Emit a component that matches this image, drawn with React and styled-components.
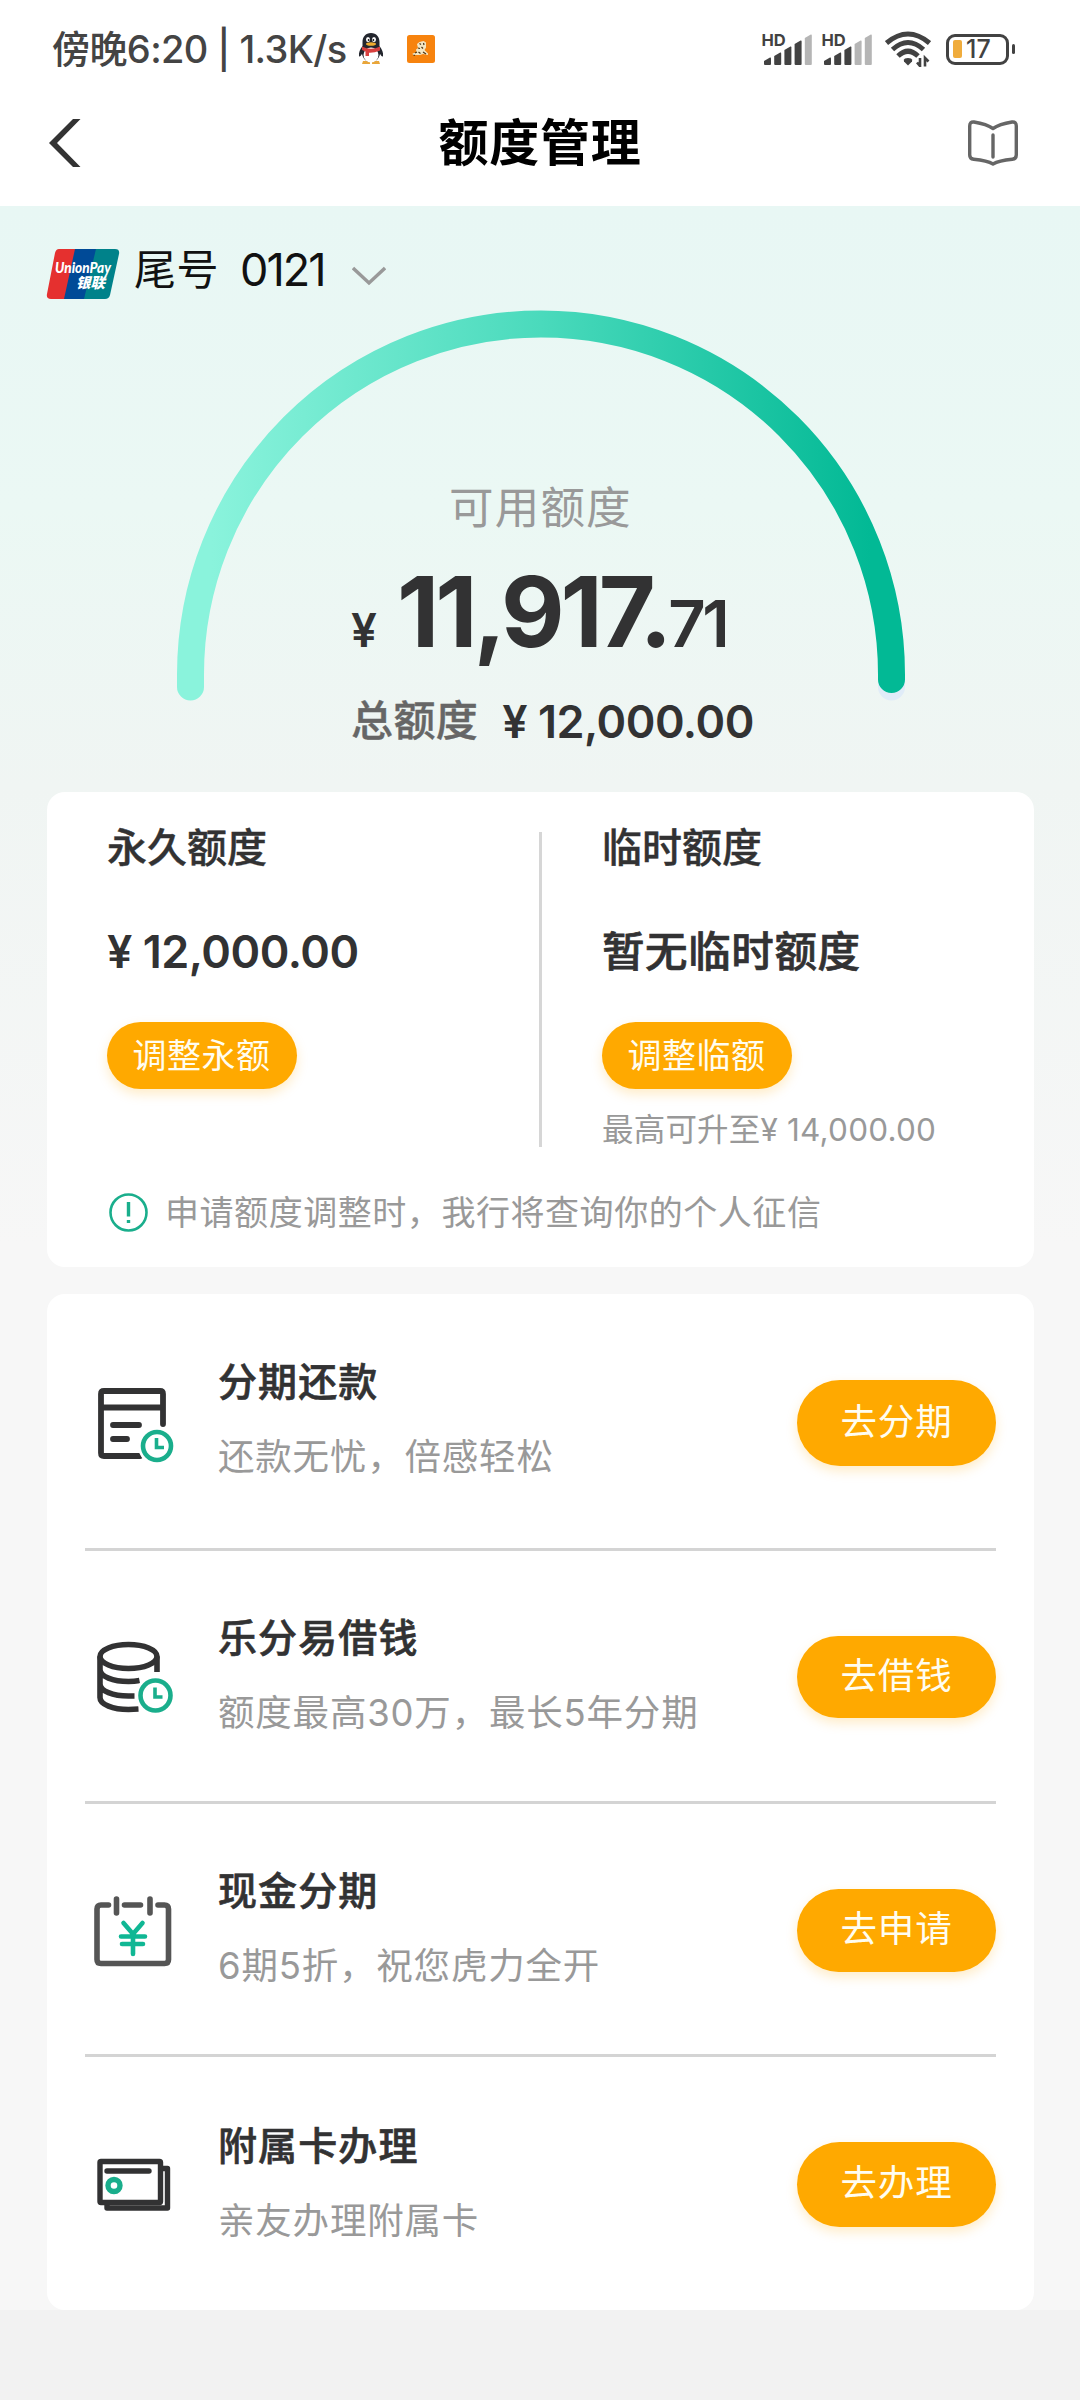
import React from 'react';
import styled, { createGlobalStyle } from 'styled-components';

const GlobalStyle = createGlobalStyle`
  * {
    box-sizing: border-box;
  }

  body {
    margin: 0;
    background: #f2f2f2;
    font-family: Inter, 'Noto Sans CJK SC', sans-serif;
    color: #323233;
  }

  svg {
    display: block;
    flex: none;
  }
`;

// Page layout
const Page = styled.div`
  width: 1080px;
  height: 2400px;
  overflow: hidden;
`;

const Text = styled.span`
  display: block;
  flex: none;
  white-space: pre;
  font-size: ${(p) => p.$size}px;
  line-height: ${(p) => p.$line || p.$size}px;
  font-weight: ${(p) => p.$weight || 400};
  letter-spacing: ${(p) => p.$spacing || 0}px;
  color: ${(p) => p.$color || '#323233'};
  -webkit-text-stroke: ${(p) => p.$stroke || 0}px currentColor;
`;

// Status bar
const StatusBar = styled.div`
  height: 98px;
  padding: 0 65px 0 52px;
  display: flex;
  align-items: center;
  justify-content: space-between;
  background: #fff;
`;

const StatusLeft = styled.div`
  display: flex;
  align-items: center;

  svg + svg {
    margin-left: 23px;
  }
`;

const StatusTime = styled(Text)`
  width: 306px;
`;

const StatusRight = styled.div`
  display: flex;
  align-items: center;
  gap: 10px;
`;

const WifiIcon = styled.svg`
  margin-left: 3px;
`;

const Battery = styled.div`
  display: flex;
  align-items: center;
  gap: 3px;
  margin-left: 5px;
`;

const BatteryBody = styled.div`
  width: 63px;
  height: 31px;
  padding: 0 4px;
  display: flex;
  align-items: center;
  gap: 4px;
  border: 3px solid #424242;
  border-radius: 9px;
`;

const BatteryLevel = styled.div`
  width: 9px;
  height: 18px;
  border-radius: 2px;
  background: #f0ac3c;
`;

const BatteryTip = styled.div`
  width: 3px;
  height: 10px;
  border-radius: 2px;
  background: #424242;
`;

// Nav bar
const NavBar = styled.div`
  height: 108px;
  padding: 0 48px 18px;
  display: grid;
  grid-template-columns: 1fr auto 1fr;
  align-items: center;
  background: #fff;

  svg:last-child {
    justify-self: end;
    margin-right: 14px;
  }
`;

// Content
const Content = styled.main`
  height: 2104px;
  padding: 0 46px 0 47px;
  background: linear-gradient(#e8f7f4 0, #ebf8f4 300px, #f0f5f3 580px, #f7f7f7 1040px);
`;

const CardPicker = styled.div`
  height: 104px;
  padding-top: 43px;
  display: flex;
  align-items: flex-start;
`;

const CardLabel = styled(Text)`
  margin-left: 15px;
`;

const CardTail = styled(Text)`
  width: 111px;
  margin-left: 21px;
`;

const PickerArrow = styled.svg`
  margin: 17px 0 0 1px;
`;

const Gauge = styled.section`
  position: relative;
  height: 482px;
  display: flex;
  flex-direction: column;
`;

const GaugeArc = styled.svg`
  position: absolute;
  top: 0;
  left: 128px;
`;

const GaugeLabel = styled(Text)`
  margin: 176px 0 0 402px;
`;

const Available = styled.div`
  height: 100px;
  margin: 32px 0 0 304px;
  display: flex;
  align-items: baseline;
`;

const AvailableMain = styled(Text)`
  margin-left: 20px;
`;

const Total = styled.div`
  margin: 36px 0 0 304px;
  display: flex;
  align-items: center;
  gap: 24px;
`;

// Cards
const Card = styled.section`
  background: #fff;
  border-radius: 18px;
`;

const LimitCard = styled(Card)`
  height: 475px;
  padding-top: 40px;
`;

const Limits = styled.div`
  height: 315px;
  display: grid;
  grid-template-columns: 492px 3px 1fr;
`;

const LimitColumn = styled.div`
  padding-left: 60px;
  display: flex;
  flex-direction: column;
  align-items: flex-start;
`;

const LimitTitle = styled(Text)`
  margin-top: -4px;
`;

const LimitValue = styled(Text)`
  margin-top: 61px;
`;

const VerticalRule = styled.div`
  background: #d6d6d6;
`;

const Button = styled.button`
  flex: none;
  border: 0;
  background: #ffa900;
  color: #fffdf0;
  font-family: inherit;
  white-space: nowrap;
  box-shadow: 0 5px 12px rgba(255, 169, 0, 0.22);
`;

const AdjustButton = styled(Button)`
  width: 190px;
  height: 67px;
  margin-top: 48px;
  padding: 0 1px 5px 0;
  border-radius: 34px;
  font-size: 34px;
  letter-spacing: 0.5px;
`;

const LimitHint = styled(Text)`
  margin-top: 25px;
`;

const Notice = styled.div`
  margin: 46px 0 0 62px;
  display: flex;
  align-items: center;
  gap: 17px;
`;

const ServiceCard = styled(Card)`
  height: 1016px;
  margin-top: 27px;
  padding: 0 38px;
`;

const ServiceRow = styled.div`
  height: ${(p) => p.$height}px;
  display: grid;
  grid-template-columns: 133px 1fr auto;
  border-bottom: ${(p) => (p.$last ? '0' : '3px solid #d4d4d4')};
`;

const ServiceIcon = styled.svg`
  margin-top: ${(p) => p.$top}px;
`;

const ServiceText = styled.div`
  display: flex;
  flex-direction: column;
  gap: 36px;
  padding-top: ${(p) => p.$top}px;
`;

const GoButton = styled(Button)`
  width: 199px;
  height: ${(p) => p.$height}px;
  margin-top: ${(p) => p.$top}px;
  padding: 0 0 8px;
  border-radius: 43px;
  font-size: 36.5px;
  letter-spacing: 0.8px;
`;

const INK = '#323233';
const GREEN = '#1aae8c';

const Penguin = () => (
  <svg width="26" height="32" viewBox="0 0 26 32">
    <path d="M5 28h7v3H4zM14 28h7l1 3h-8z" fill="#e9a63a" />
    <path d="M13 0c-5.500 0-8.500 4-8.500 9v4C2 16 .5 20 1 23c.5 1.500 2-.5 3-2 1 5 4.500 8 9 8s8-3 9-8c1 1.500 2.500 3.500 3 2 .5-3-1-7-3.500-10V9c0-5-3-9-8.500-9z" fill="#23262e" />
    <ellipse cx="13" cy="22" rx="7.500" ry="7.500" fill="#fff" />
    <ellipse cx="10" cy="6.500" rx="2" ry="2.600" fill="#fff" />
    <ellipse cx="16" cy="6.500" rx="2" ry="2.600" fill="#fff" />
    <circle cx="10.600" cy="7" r=".9" fill="#111" />
    <circle cx="15.400" cy="7" r=".9" fill="#111" />
    <ellipse cx="13" cy="11" rx="5" ry="1.800" fill="#efac2f" />
    <path d="M4 13.500q9 4.500 18 0v4q-6 2.500-11 2.200V23H7.500v-4.500L4 17z" fill="#d8403f" />
  </svg>
);

const TigerBadge = () => (
  <svg width="28" height="28" viewBox="0 0 28 28">
    <rect width="28" height="28" rx="2.500" fill="#f7830e" />
    <path d="M10 9l2.500-2 4-1 2.500 1.500v5L17.500 15l3.500 3.500v1.500l-5-1-3 1H6l-.5-1.500 4-1-.5-3 2-1.500z" fill="#f3e6c4" />
    <path d="M12.500 8.500l1.500 1M16.500 8l.5 2M11 13l2 .5M14.500 12l1.500 1.500M8 18l2-1M11.500 17l2 1.500M16 17l3 2M6.500 20l1.500.5" stroke="#4c3414" strokeWidth="1.200" fill="none" />
  </svg>
);

const Signal = ({ level }) => (
  <svg width="50" height="38" viewBox="0 0 50 38" overflow="visible">
    <text x="-.5" y="15.500" fontSize="16.500" fontWeight="700" fill="#424242">HD</text>
    {[7, 12, 18, 24, 30].map((height, i) => (
      <path
        key={height}
        d={`M${2 + i * 10.200} ${35 - height + 3}l6-3.500q1-.4 1 1V34q0 1-1 1h-5q-1 0-1-1z`}
        fill={i < level ? '#424242' : '#b5b5b5'}
      />
    ))}
  </svg>
);

const Wifi = () => (
  <WifiIcon width="46" height="36" viewBox="0 0 46 36">
    <g fill="none" stroke="#424242" strokeWidth="5">
      <path d="M1.500 12Q23-6 44.500 12" />
      <path d="M7.500 18.500Q23 4.500 38.500 18.500" />
      <path d="M13 25Q23 15.500 33 25" />
    </g>
    <path d="M23 34.500l-4-4q-1-2 1-3 3-1 6 0 2 1 1 3z" fill="#424242" />
    <path d="M35 27v8l-3-3.500M40 35.500V27l3.500 3.500" fill="none" stroke="#424242" strokeWidth="2.600" />
  </WifiIcon>
);

const BackIcon = () => (
  <svg width="33" height="50" viewBox="0 0 33 50">
    <path d="M25 1h7.500L9 25l23.500 24H25L1 25z" fill="#333" />
  </svg>
);

const BookIcon = () => (
  <svg width="50" height="46" viewBox="0 0 50 46" fill="none" stroke="#666" strokeWidth="3.400" strokeLinecap="round" strokeLinejoin="round">
    <path d="M25 8.500C20 5 12 3 6 2Q1.700 1.500 1.700 6v29q0 4 4 4.300C13 40 20 41 25 44 30 41 37 40 44.300 39.300q4-.3 4-4.300V6q0-4.500-4.300-4C38 3 30 5 25 8.500zM25 15v22" />
  </svg>
);

const UnionPayLogo = () => (
  <svg width="72" height="50" viewBox="0 0 72 50" overflow="visible">
    <path d="M12 0h18L19 50H4q-5 0-4-5L8 4q1-4 4-4z" fill="#e5302f" />
    <path d="M28 0h22L39 50H17z" fill="#004a97" />
    <path d="M49 0h19q5 0 4 5l-9 41q-1 4-5 4H37z" fill="#00828a" />
    <g fill="#fff" fontWeight="900" fontStyle="italic">
      <text x="8" y="24" fontSize="15" fontFamily="Lato" textLength="56" lengthAdjust="spacingAndGlyphs">UnionPay</text>
      <text x="29" y="38.500" fontSize="14.500" fontFamily="Noto Sans CJK SC" textLength="29">银联</text>
    </g>
  </svg>
);

const InfoIcon = () => (
  <svg width="39" height="39" viewBox="0 0 39 39" fill="none" stroke={GREEN}>
    <circle cx="19.500" cy="19.500" r="18" strokeWidth="2.600" />
    <path d="M19.500 9v14.500M19.500 27v3" strokeWidth="3.400" />
  </svg>
);

const Clock = ({ cx, cy, r = 14 }) => (
  <g fill="none" stroke={GREEN} strokeLinecap="butt">
    <circle cx={cx} cy={cy} r={r + 3.500} fill="#fff" stroke="#fff" strokeWidth="3" />
    <circle cx={cx} cy={cy} r={r} strokeWidth="4.600" />
    <path d={`M${cx - 0.500} ${cy - 8}v9.500h7.500`} strokeWidth="3.600" />
  </g>
);

// Every service icon is drawn in the same 92x80 box
const BillIcon = ({ top }) => (
  <ServiceIcon $top={top} width="92" height="80" viewBox="0 0 92 80" fill="none" stroke={INK} strokeWidth="5.800" strokeLinecap="round">
    <path d="M78 38V8q0-3-3-3H19q-3 0-3 3v59q0 3 3 3h36M16 21.500h62M28 39h26M28 53h14" />
    <Clock cx={72} cy={60} />
  </ServiceIcon>
);

const CoinsIcon = ({ top }) => (
  <ServiceIcon $top={top} width="92" height="80" viewBox="0 0 92 80" fill="none" stroke={INK} strokeWidth="5.600">
    <ellipse cx="43.500" cy="16.500" rx="28.500" ry="12" />
    <path d="M15 16.500v41c0 7 13 12 28.500 12l10-.5M72 16.500V32M15 29.500c0 7 13 12 28.500 12q6 0 11-1M15 44c0 7 13 12 28.500 12h6" />
    <Clock cx={70.500} cy={55.500} r={15} />
  </ServiceIcon>
);

const CalendarIcon = ({ top }) => (
  <ServiceIcon $top={top} width="92" height="80" viewBox="0 0 92 80" fill="none" stroke="#555" strokeWidth="5.600" strokeLinecap="round">
    <path d="M23.500 12h-7.500q-4 0-4 4v50.500q0 4 4 4h63.500q4 0 4-4V16q0-4-4-4h-6.500M39.500 12h16M31.500 6v14M65 6v14" />
    <path d="M38.500 30L48 41l9.500-11M48 41v20M36 43.500h24M37 51h21" stroke="#10b794" strokeWidth="4.600" />
  </ServiceIcon>
);

const CardsIcon = ({ top }) => (
  <ServiceIcon $top={top} width="92" height="80" viewBox="0 0 92 80" fill="none" stroke={INK} strokeWidth="5.400" strokeLinejoin="round">
    <path d="M22 58v4h60.500V22.500H76" />
    <rect x="15" y="15.500" width="60.500" height="41" rx="1" />
    <path d="M22 25h42" strokeLinecap="round" />
    <circle cx="29" cy="39.500" r="6" stroke={GREEN} />
  </ServiceIcon>
);

const services = [
  { title: '分期还款', desc: '还款无忧，倍感轻松', action: '去分期', Icon: BillIcon, iconTop: 92, textTop: 68, height: 257, button: 86, buttonTop: 86 },
  { title: '乐分易借钱', desc: '额度最高30万，最长5年分期', action: '去借钱', Icon: CoinsIcon, iconTop: 89, textTop: 67, height: 253, button: 82, buttonTop: 85 },
  { title: '现金分期', desc: '6期5折，祝您虎力全开', action: '去申请', Icon: CalendarIcon, iconTop: 89, textTop: 67, height: 253, button: 83, buttonTop: 85 },
  { title: '附属卡办理', desc: '亲友办理附属卡', action: '去办理', Icon: CardsIcon, iconTop: 89, textTop: 69, height: 253, button: 85, buttonTop: 85 },
];

const Service = ({ title, desc, action, Icon, iconTop, textTop, height, button, buttonTop, last }) => (
  <ServiceRow $height={height} $last={last}>
    <Icon top={iconTop} />
    <ServiceText $top={textTop}>
      <Text $size={39} $weight={500} $stroke={0.6} $spacing={1.1}>{title}</Text>
      <Text $size={36.500} $line={40} $spacing={0.8} $color="#999">{desc}</Text>
    </ServiceText>
    <GoButton $height={button} $top={buttonTop}>{action}</GoButton>
  </ServiceRow>
);

export default function App() {
  return (
    <Page>
      <GlobalStyle />
      <StatusBar>
        <StatusLeft>
          <StatusTime $size={38} $weight={500} $spacing={-0.6} $color="#444">傍晚6:20 | 1.3K/s</StatusTime>
          <Penguin />
          <TigerBadge />
        </StatusLeft>
        <StatusRight>
          <Signal level={4} />
          <Signal level={3} />
          <Wifi />
          <Battery>
            <BatteryBody>
              <BatteryLevel />
              <Text $size={25} $weight={500} $color="#424242">17</Text>
            </BatteryBody>
            <BatteryTip />
          </Battery>
        </StatusRight>
      </StatusBar>

      <NavBar>
        <BackIcon />
        <Text $size={50} $weight={700} $spacing={0.8} $color="#000">额度管理</Text>
        <BookIcon />
      </NavBar>

      <Content>
        <CardPicker>
          <UnionPayLogo />
          <CardLabel $size={42} $spacing={0.5} $color="#111">尾号</CardLabel>
          <CardTail $size={45} $line={42} $spacing={-2} $color="#111">0121</CardTail>
          <PickerArrow width="34" height="20" viewBox="0 0 34 20" fill="none" stroke="#999" strokeWidth="3.400">
            <path d="M1 2l16 15L33 2" />
          </PickerArrow>
        </CardPicker>

        <Gauge>
          <GaugeArc width="732" height="396" viewBox="0 0 732 396" fill="none" strokeWidth="27" strokeLinecap="round">
            <defs>
              <linearGradient id="arc" x1="0" y1="0" x2="732" y2="0" gradientUnits="userSpaceOnUse">
                <stop offset="0.05" stopColor="#8af3dc" />
                <stop offset="0.5" stopColor="#4adabc" />
                <stop offset="0.95" stopColor="#02b995" />
              </linearGradient>
            </defs>
            <path d="M716.500 370v7" stroke="#e0ecf8" />
            <path d="M15.500 377v-12.500a350.500 350.500 0 0 1 701 0v5" stroke="url(#arc)" />
          </GaugeArc>
          <GaugeLabel $size={44.500} $spacing={1.2} $color="#999">可用额度</GaugeLabel>
          <Available>
            <Text $size={46} $weight={600}>¥</Text>
            <AvailableMain $size={98} $weight={700} $spacing={-4}>11,917.</AvailableMain>
            <Text $size={65} $weight={600} $spacing={-3.5}>71</Text>
          </Available>
          <Total>
            <Text $size={42} $weight={500} $stroke={0.4} $spacing={0.4} $color="#666">总额度</Text>
            <Text $size={45} $weight={600} $spacing={-0.5}>¥ 12,000.00</Text>
          </Total>
        </Gauge>

        <LimitCard>
          <Limits>
            <LimitColumn>
              <LimitTitle $size={40} $weight={500} $stroke={0.4}>永久额度</LimitTitle>
              <LimitValue $size={45} $weight={600} $spacing={-0.5}>¥ 12,000.00</LimitValue>
              <AdjustButton>调整永额</AdjustButton>
            </LimitColumn>
            <VerticalRule />
            <LimitColumn>
              <LimitTitle $size={40} $weight={500} $stroke={0.4}>临时额度</LimitTitle>
              <LimitValue $size={42.500} $line={45} $weight={500} $stroke={0.7} $spacing={0.6}>暂无临时额度</LimitValue>
              <AdjustButton>调整临额</AdjustButton>
              <LimitHint $size={31.500} $spacing={0.2} $color="#999">最高可升至¥ 14,000.00</LimitHint>
            </LimitColumn>
          </Limits>
          <Notice>
            <InfoIcon />
            <Text $size={34} $spacing={0.55} $color="#999">申请额度调整时，我行将查询你的个人征信</Text>
          </Notice>
        </LimitCard>

        <ServiceCard>
          {services.map((item, i) => (
            <Service key={item.title} {...item} last={i === services.length - 1} />
          ))}
        </ServiceCard>
      </Content>
    </Page>
  );
}
